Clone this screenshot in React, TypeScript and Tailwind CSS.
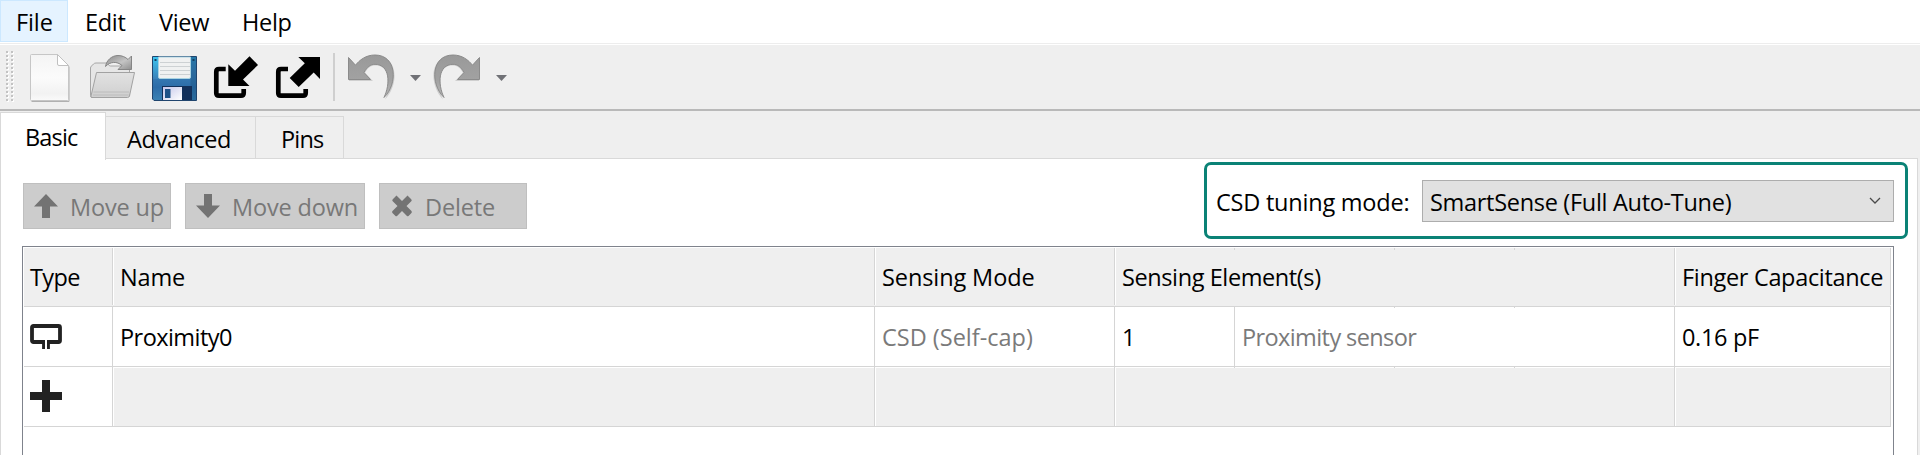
import type { ReactNode } from "react";

function Label({ children, className = "" }: { children: ReactNode; className?: string }) {
  return <span className={`block whitespace-pre leading-8 ${className}`}>{children}</span>;
}

function MenuBar() {
  return (
    <nav className="flex h-[43px] bg-white">
      <div className="h-[42px] w-[68px] border border-[#cce8ff] bg-[#e5f3ff] pt-[5px] pl-[15px]">
        <Label className="tracking-[-0.1px]">File</Label>
      </div>
      <Label className="mt-[6px] w-[74px] pl-[17px] tracking-[-0.3px]">Edit</Label>
      <Label className="mt-[6px] w-[82px] pl-[17px] tracking-[-0.3px]">View</Label>
      <Label className="mt-[6px] pl-[18px] tracking-[-0.3px]">Help</Label>
    </nav>
  );
}

function Grip() {
  const dots = Array.from({ length: 13 }, (_, i) => i * 4);
  return (
    <svg width="8" height="54" viewBox="0 0 8 54" shapeRendering="crispEdges">
      {dots.map((y) => (
        <g key={y}>
          <rect x="1" y={y + 1} width="2" height="2" fill="#fff" />
          <rect x="0" y={y} width="2" height="2" fill="#c3c3c3" />
          <rect x="6" y={y + 1} width="2" height="2" fill="#fff" />
          <rect x="5" y={y} width="2" height="2" fill="#c3c3c3" />
        </g>
      ))}
    </svg>
  );
}

function NewIcon() {
  return (
    <svg width="42" height="50" viewBox="29 53 42 50">
      <defs>
        <linearGradient id="page" x1="0" y1="0" x2="0" y2="1">
          <stop offset="0" stopColor="#f4f4f4" />
          <stop offset=".5" stopColor="#fbfbfb" />
          <stop offset=".85" stopColor="#f2f2f2" />
          <stop offset="1" stopColor="#fafafa" />
        </linearGradient>
      </defs>
      <path d="M31.5 101.5h37.5V66.5" fill="none" stroke="#b0b0b0" strokeWidth="1" />
      <path d="M31.5 54.5H57.5L68.5 65.5V99.5q0 1-1 1H31.500q-1 0-1-1V55.500q0-1 1-1z" fill="url(#page)" stroke="#c6c6c6" />
      <path d="M57.500 54.500V64q0 1.500 1.500 1.500H68.500z" fill="#fff" stroke="#c0c0c0" />
    </svg>
  );
}

function OpenIcon() {
  return (
    <svg width="47" height="46" viewBox="89 54 47 46">
      <defs>
        <linearGradient id="folder" x1="0" y1="0" x2="0" y2="1">
          <stop offset="0" stopColor="#e2e2e2" />
          <stop offset="1" stopColor="#cfcfcf" />
        </linearGradient>
        <linearGradient id="swoop" x1="0" y1="0" x2="1" y2="1">
          <stop offset="0" stopColor="#888" />
          <stop offset=".55" stopColor="#c4c4c4" />
          <stop offset="1" stopColor="#8f8f8f" />
        </linearGradient>
      </defs>
      <path d="M92.500 97.500q-2 0-2-2V68q0-1 1-2l2-2q1-1 2.500-1h11q1 0 1.500 1.500t2 1.500H129.500V96z" fill="#e6e6e6" stroke="#a6a6a6" />
      <path d="M96.500 72.500H134.500L129.500 96q-.5 1.500-2 1.500H92q-1.500 0-1-1.500z" fill="url(#folder)" stroke="#a2a2a2" />
      <path d="M93.500 92H129M93 95H128.500" stroke="#bcbcbc" />
      <path d="M105.500 66.500C106.500 60 112 55.500 118 55.500c4 0 7.500 1.500 10 4l3.500-3.500V69.500H118l4-4C117 61 110 61.500 105.500 66.500z" fill="url(#swoop)" stroke="#858585" />
    </svg>
  );
}

function SaveIcon() {
  return (
    <svg width="46" height="46" viewBox="152 56 46 46">
      <defs>
        <linearGradient id="disk" x1="0" y1="0" x2="0" y2="1">
          <stop offset="0" stopColor="#2f9fd0" />
          <stop offset=".35" stopColor="#3a80b8" />
          <stop offset=".7" stopColor="#2c6ca8" />
          <stop offset="1" stopColor="#3b82b4" />
        </linearGradient>
        <linearGradient id="edge" x1="0" y1="0" x2="0" y2="1">
          <stop offset="0" stopColor="#3cc4f0" />
          <stop offset="1" stopColor="#3a80b8" />
        </linearGradient>
        <linearGradient id="metal" x1="0" y1="0" x2="1" y2="1">
          <stop offset="0" stopColor="#c4c6ea" />
          <stop offset="1" stopColor="#fff" />
        </linearGradient>
      </defs>
      <path d="M152.500 56.500H196.500V100.500H154L152.500 99z" fill="url(#disk)" stroke="#20456e" />
      <path d="M153 57h5.500v22H153z" fill="url(#edge)" />
      <path d="M190.500 57h5.500v43h-5.500z" fill="#1d5a88" opacity=".55" />
      <path d="M158.500 57h32v20q0 1.500-1.500 1.500h-29q-1.500 0-1.500-1.500z" fill="#f0f1f1" stroke="#a9d3e2" />
      <path d="M160 62.500h30M160 66.500h30M160 70.500h30M160 74.500h30" stroke="#cdd1d3" />
      <path d="M154.500 59h2v2h-2zM192.500 59h2v2h-2z" fill="#124064" />
      <path d="M162 86h30v14h-30z" fill="#12305a" />
      <path d="M163 87h19v13h-19z" fill="url(#metal)" />
      <path d="M165 89h5.500v9H165z" fill="#1e5288" />
    </svg>
  );
}

function ImportIcon() {
  return (
    <svg width="46" height="44" viewBox="213 55 46 44">
      <path d="M225.700 69H219q-2.700 0-2.700 2.700v21.300q0 2.700 2.700 2.700h22q2.700 0 2.700-2.700V89" fill="none" stroke="#000" strokeWidth="4.700" />
      <path d="M228.300 64.300L235 70.700 249.500 56.200 258 65 243 79.500 249.500 86H228.300z" />
    </svg>
  );
}

function ExportIcon() {
  return (
    <svg width="46" height="44" viewBox="275 55 46 44">
      <path d="M288 69H281q-2.700 0-2.700 2.700v21.300q0 2.700 2.700 2.700h22q2.700 0 2.700-2.700V89" fill="none" stroke="#000" strokeWidth="4.700" />
      <path d="M298.300 57H320V79L313.700 72.500 298.700 86.900 289.700 77.900 304.800 63.200z" />
    </svg>
  );
}

function UndoIcon({ flip = false }: { flip?: boolean }) {
  return (
    <svg width="50" height="48" viewBox="347 53 50 48" className={flip ? "-scale-x-100" : ""}>
      <defs>
        <linearGradient id="arc" x1="0" y1="0" x2="0" y2="1">
          <stop offset="0" stopColor="#999" />
          <stop offset=".6" stopColor="#a2a2a2" />
          <stop offset="1" stopColor="#b8b8b8" />
        </linearGradient>
      </defs>
      <path d="M349 58V81H373L365 73C368 67 371.500 65.500 376 65.500C389 65.500 393 84 385 99.500C399 85 399 56 376 56C367 56 360 61 356.500 66z" fill="#cfcfcf" />
      <path d="M348.500 57.500V79.500H370.500L364 72.500C367 67 370.500 64.300 375 64.300C390 64.300 390.500 84 384 97.500C398 84 397 55 375 55C366 55 359.500 60 355.500 65.200z" fill="url(#arc)" stroke="#8b8b8b" />
    </svg>
  );
}

function DropArrow() {
  return (
    <svg width="11" height="6" viewBox="0 0 11 6" className="mt-[30px]">
      <path d="M0 0H11L5.500 6z" fill="#707176" />
    </svg>
  );
}

function ToolBar() {
  return (
    <div className="flex h-[66px] items-start border-b-2 border-[#b9b9b9] bg-[#efefef]">
      <div className="mt-[6px] ml-[6px]"><Grip /></div>
      <div className="mt-[8px] ml-[15px]"><NewIcon /></div>
      <div className="mt-[9px] ml-[18px]"><OpenIcon /></div>
      <div className="mt-[11px] ml-[16px]"><SaveIcon /></div>
      <div className="mt-[10px] ml-[15px]"><ImportIcon /></div>
      <div className="mt-[10px] ml-[16px]"><ExportIcon /></div>
      <div className="mt-[8px] ml-[12px] h-[48px] w-[2px] bg-[#cfcfcf]" />
      <div className="mt-[8px] ml-[12px]"><UndoIcon /></div>
      <div className="ml-[13px]"><DropArrow /></div>
      <div className="mt-[8px] ml-[10px]"><UndoIcon flip /></div>
      <div className="ml-[15px]"><DropArrow /></div>
    </div>
  );
}

function Tabs() {
  return (
    <div className="relative z-10 flex h-[49px] items-start pt-[1px]">
      <div className="h-[48px] w-[106px] border border-b-0 border-[#d9d9d9] bg-white pt-[8px] pl-[24px]">
        <Label className="tracking-[-0.85px]">Basic</Label>
      </div>
      <div className="mt-[4px] h-[43px] w-[150px] border border-l-0 border-[#d9d9d9] bg-[#efefef] pt-[6px] pl-[21px]">
        <Label className="tracking-[-0.4px]">Advanced</Label>
      </div>
      <div className="mt-[4px] h-[43px] w-[88px] border border-l-0 border-[#d9d9d9] bg-[#efefef] pt-[6px] pl-[25px]">
        <Label className="tracking-[-0.8px]">Pins</Label>
      </div>
    </div>
  );
}

function ActionButton({ icon, className, children }: { icon: ReactNode; className: string; children: ReactNode }) {
  return (
    <button className={`flex h-[46px] items-center border border-[#bfbfbf] bg-[#cccccc] pl-[10px] text-left text-[#787878] ${className}`}>
      <svg width="26" height="26" viewBox="0 0 26 26" fill="#737373">{icon}</svg>
      {children}
    </button>
  );
}

function Controls() {
  return (
    <div className="flex h-[87px] items-start">
      <div className="mt-[24px] ml-[22px] flex gap-[14px]">
        <ActionButton className="w-[148px]" icon={<path d="M12 1L24 13.500H16V25H8V13.500H0z" />}>
          <Label className="mt-[2px] ml-[10px] tracking-[-0.15px]">Move up</Label>
        </ActionButton>
        <ActionButton className="w-[180px]" icon={<path d="M12 25L24 12.500H16V1H8V12.500H0z" />}>
          <Label className="mt-[2px] ml-[10px] tracking-[-0.15px]">Move down</Label>
        </ActionButton>
        <ActionButton
          className="w-[148px]"
          icon={<path d="M3.500 5.500L6.500 2.500 12 8 17.500 2.500 20.500 5.500Q22.500 7 21.500 8L16.500 13 21.500 18Q22.500 19 21 20.500L18.500 23Q17.500 23.500 17 23L12 18 7 23Q6 23.500 5.500 23L2.500 20Q1.500 19 2.500 18L7.500 13 2.500 8Q1.500 7 3.500 5.500z" />}
        >
          <Label className="mt-[2px] ml-[9px] tracking-[-0.15px]">Delete</Label>
        </ActionButton>
      </div>
      <div className="mt-[3px] ml-[677px] flex h-[77px] w-[704px] items-start rounded-[7px] border-3 border-[#0a8276]">
        <Label className="mt-[21px] ml-[9px] w-[206px] tracking-[-0.22px]">CSD tuning mode:</Label>
        <div className="mt-[15px] flex h-[42px] w-[472px] items-start justify-between border border-[#adadad] bg-[#e1e1e1] pt-[5px] pr-[12px] pl-[7px]">
          <Label className="tracking-[-0.3px]">SmartSense (Full Auto-Tune)</Label>
          <svg width="12" height="8" viewBox="0 0 12 8" className="mt-[11px]">
            <path d="M1 1L6 6L11 1" fill="none" stroke="#4a4a4a" strokeWidth="1.300" />
          </svg>
        </div>
      </div>
    </div>
  );
}

function Ticks({ className }: { className: string }) {
  return (
    <div className={`absolute flex ${className}`}>
      <div className="h-full w-px bg-[#d5d5d5]" />
      <div className="ml-[159px] h-full w-px bg-[#d5d5d5]" />
      <div className="ml-[119px] h-full w-px bg-[#d5d5d5]" />
    </div>
  );
}

function HeadCell({ children, className = "", first = false }: { children: ReactNode; className?: string; first?: boolean }) {
  return (
    <div className={`border-b border-[#d5d5d5] bg-[#efefef] ${className}`}>
      <div className={`flex h-[57px] border-r border-r-[#d5d5d5] ${first ? "" : "border-l border-l-white"}`}>
        <Label className="mt-[13px]">{children}</Label>
      </div>
    </div>
  );
}

function Cell({ children, className = "" }: { children?: ReactNode; className?: string }) {
  return <div className={`border-r border-b border-[#d5d5d5] bg-white ${className}`}>{children}</div>;
}

function EmptyCell({ className = "" }: { className?: string }) {
  return (
    <div className={`border-r border-b border-[#d5d5d5] bg-white pt-px pl-px ${className}`}>
      <div className="h-full bg-[#efefef]" />
    </div>
  );
}

function SensorTable() {
  return (
    <div className="ml-[21px] h-[209px] w-[1872px] border border-b-0 border-[#7f838c] bg-white pt-px pl-px">
      <div className="relative grid w-[1867px] grid-cols-[89px_762px_240px_120px_440px_216px] grid-rows-[59px_60px_60px]">
        <HeadCell first><span className="ml-[6px] tracking-[-0.65px]">Type</span></HeadCell>
        <HeadCell><span className="ml-[6px] tracking-[-0.15px]">Name</span></HeadCell>
        <HeadCell><span className="ml-[6px] tracking-[-0.1px]">Sensing Mode</span></HeadCell>
        <HeadCell className="col-span-2"><span className="ml-[6px] tracking-[-0.4px]">Sensing Element(s)</span></HeadCell>
        <HeadCell><span className="ml-[6px] tracking-[-0.32px]">Finger Capacitance</span></HeadCell>

        <Cell className="pt-[17px] pl-[6px]">
          <svg width="32" height="26" viewBox="0 0 32 26">
            <path d="M14 25V18H3.500Q2 18 2 16.500V3.500Q2 2 3.500 2H28.500Q30 2 30 3.500V16.500Q30 18 28.500 18H18V25" fill="none" stroke="#222" strokeWidth="3.800" />
            <path d="M15 15V26H17V15z" fill="#fff" />
          </svg>
        </Cell>
        <Cell className="pt-[14px] pl-[7px]"><Label className="tracking-[-0.55px]">Proximity0</Label></Cell>
        <Cell className="pt-[14px] pl-[7px] text-[#7a7a7a]"><Label>CSD (Self-cap)</Label></Cell>
        <Cell className="pt-[14px] pl-[7px]"><Label>1</Label></Cell>
        <Cell className="pt-[14px] pl-[7px] text-[#7a7a7a]"><Label className="tracking-[-0.6px]">Proximity sensor</Label></Cell>
        <Cell className="pt-[14px] pl-[7px]"><Label className="tracking-[-0.33px]">0.16 pF</Label></Cell>

        <Cell className="pt-[13px] pl-[6px]">
          <svg width="32" height="32" viewBox="0 0 32 32" shapeRendering="crispEdges">
            <path d="M12 0h8v12h12v8H20v12h-8V20H0v-8h12z" fill="#222" />
          </svg>
        </Cell>
        <EmptyCell />
        <EmptyCell />
        <EmptyCell className="col-span-2" />
        <EmptyCell />

        <Ticks className="top-0 left-[1210px] h-[2px]" />
        <Ticks className="top-[59px] left-[1210px] h-px" />
        <Ticks className="top-[119px] left-[1210px] h-px" />
      </div>
    </div>
  );
}

export default function App() {
  return (
    <div className="h-[455px] w-[1920px] overflow-hidden bg-[#efefef] font-['Open_Sans','Noto_Sans',sans-serif] text-[23.5px] text-black">
      <MenuBar />
      <div className="h-[2px] border-t border-[#ededed] bg-white" />
      <ToolBar />
      <Tabs />
      <main className="-mt-[2px] h-[297px] w-[1918px] border border-b-0 border-[#d9d9d9] bg-white">
        <Controls />
        <SensorTable />
      </main>
    </div>
  );
}
